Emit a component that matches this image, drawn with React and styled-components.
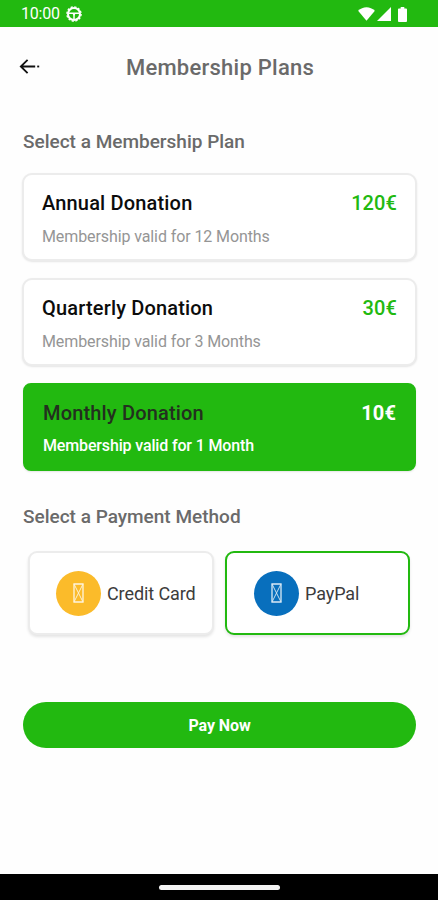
import React, { useState } from "react";
import styled, { createGlobalStyle, ThemeProvider } from "styled-components";

const theme = {
  primary: "#22b910",
  card: "#ffffff",
  text_primary: "#0c0c0c",
  text_secondary: "#6a6a6a",
  text_muted: "#959595",
  border: "#ececec",
};

const GlobalStyle = createGlobalStyle`
  * {
    box-sizing: border-box;
  }
  body {
    margin: 0;
    background: #ffffff;
    font-family: Roboto, "Liberation Sans", sans-serif;
  }
`;

const Screen = styled.div`
  width: 438px;
  height: 900px;
  display: flex;
  flex-direction: column;
  background: #fefefe;
  overflow: hidden;
`;

const StatusBar = styled.div`
  height: 27px;
  padding: 1px 31px 0 21px;
  display: flex;
  align-items: center;
  justify-content: space-between;
  background: ${({ theme }) => theme.primary};
  color: white;
`;

const StatusGroup = styled.div`
  display: flex;
  align-items: center;
  gap: ${({ $gap }) => $gap}px;
`;

const Clock = styled.span`
  font-size: 16px;
  line-height: 20px;
  letter-spacing: -0.2px;
`;

const BatterySlot = styled.span`
  display: flex;
  margin-left: 5px;
`;

const Header = styled.header`
  height: 80px;
  padding: 0 19px;
  display: grid;
  grid-template-columns: 24px 1fr 22px;
  align-items: center;
`;

const BackButton = styled.button`
  display: flex;
  padding: 0;
  border: none;
  background: none;
  cursor: pointer;
`;

const Title = styled.h1`
  margin: 0;
  padding-top: 2px;
  font-size: 22px;
  line-height: 26px;
  font-weight: 500;
  letter-spacing: 0.25px;
  text-align: center;
  color: ${({ theme }) => theme.text_secondary};
`;

const Content = styled.main`
  flex: 1;
  padding: 23px 21px 0 22px;
  display: flex;
  flex-direction: column;
`;

const SectionTitle = styled.h2`
  margin: 0 0 0 1px;
  font-size: 19px;
  line-height: 24px;
  font-weight: 500;
  color: ${({ theme }) => theme.text_secondary};
`;

const PlanList = styled.div`
  margin: 19px 0 34px;
  display: flex;
  flex-direction: column;
  gap: 17px;
`;

const PlanCard = styled.div`
  height: 88px;
  padding: 16px 18px 0;
  border: 2px solid ${({ theme }) => theme.border};
  border-radius: 10px;
  background: ${({ theme }) => theme.card};
  box-shadow: 0 1px 2px rgba(0, 0, 0, 0.1);
  cursor: pointer;
  ${({ $active, theme }) =>
    $active &&
    `
    margin: 0 1px;
    border-color: ${theme.primary};
    border-radius: 8px;
    background: ${theme.primary};
  `}
`;

const PlanTop = styled.div`
  display: flex;
  justify-content: space-between;
  line-height: 24px;
  font-size: 20px;
`;

const PlanName = styled.span`
  font-weight: 500;
  letter-spacing: 0.17px;
  color: ${({ $active, theme }) => ($active ? "#23301f" : theme.text_primary)};
`;

const PlanPrice = styled.span`
  font-weight: ${({ $active }) => ($active ? 700 : 500)};
  letter-spacing: 0.1px;
  color: ${({ $active, theme }) => ($active ? "white" : theme.primary)};
`;

const PlanNote = styled.p`
  margin: ${({ $active }) => ($active ? 11 : 12)}px 0 0;
  font-size: 16px;
  line-height: 20px;
  font-weight: ${({ $active }) => ($active ? 500 : 400)};
  letter-spacing: ${({ $active }) => ($active ? -0.15 : -0.1)}px;
  color: ${({ $active, theme }) => ($active ? "white" : theme.text_muted)};
`;

const MethodRow = styled.div`
  margin: 22px 7px 67px 6px;
  display: grid;
  grid-template-columns: 186px 185px;
  justify-content: space-between;
`;

const MethodCard = styled.div`
  height: 84px;
  padding-left: ${({ $active }) => ($active ? 27 : 26)}px;
  display: flex;
  align-items: center;
  gap: 6px;
  border: 2px solid ${({ $active, theme }) => ($active ? theme.primary : theme.border)};
  border-radius: 9px;
  background: ${({ theme }) => theme.card};
  box-shadow: 0 2px 3px rgba(0, 0, 0, 0.1);
  cursor: pointer;
`;

const MethodIcon = styled.span`
  width: 45px;
  height: 45px;
  display: flex;
  align-items: center;
  justify-content: center;
  border-radius: 50%;
  background: ${({ $color }) => $color};
`;

const MethodName = styled.span`
  padding-top: 1px;
  font-size: 18px;
  line-height: 22px;
  letter-spacing: -0.1px;
  color: #3c3c3c;
`;

const PayButton = styled.button`
  height: 46px;
  margin: 0 1px;
  padding: 1px 0 0;
  border: none;
  border-radius: 23px;
  background: ${({ theme }) => theme.primary};
  color: white;
  font-family: inherit;
  font-size: 16px;
  font-weight: 700;
  letter-spacing: -0.1px;
  cursor: pointer;
`;

const NavBar = styled.div`
  height: 26px;
  display: flex;
  justify-content: center;
  align-items: center;
  background: #000000;
`;

const NavHandle = styled.div`
  width: 121px;
  height: 5px;
  border-radius: 3px;
  background: #f4f4f4;
`;

const plans = [
  { id: "annual", name: "Annual Donation", price: "120€", note: "Membership valid for 12 Months" },
  { id: "quarterly", name: "Quarterly Donation", price: "30€", note: "Membership valid for 3 Months" },
  { id: "monthly", name: "Monthly Donation", price: "10€", note: "Membership valid for 1 Month" },
];

const methods = [
  { id: "card", name: "Credit Card", color: "#fbbb2a" },
  { id: "paypal", name: "PayPal", color: "#086fbd" },
];

const WheelIcon = () => (
  <svg width="16" height="16" viewBox="0 0 16 16" fill="none" stroke="white">
    <circle cx="8" cy="8" r="6" strokeWidth="2" />
    <circle cx="8" cy="8" r="7.1" strokeWidth="1.4" strokeDasharray="2.2 1.52" />
    <path d="M3 7.2h10M8 8v5" strokeWidth="1.5" />
    <path d="M5.8 7h4.4L8 9.8z" fill="white" stroke="none" />
  </svg>
);

const WifiIcon = () => (
  <svg width="17" height="14" viewBox="0 0 18 15" fill="white">
    <path d="M0 4.1C5-1 13-1 18 4.1L9 14.8z" />
  </svg>
);

const SignalIcon = () => (
  <svg width="14" height="14" viewBox="0 0 14 14" fill="white">
    <path d="M14 0v14H0z" />
  </svg>
);

const BatteryIcon = () => (
  <svg width="9" height="15" viewBox="0 0 10 16" preserveAspectRatio="none" fill="white">
    <path d="M3 0h4v1.6h2q1 0 1 1V15q0 1-1 1H1q-1 0-1-1V2.6q0-1 1-1h2z" />
  </svg>
);

const BackIcon = () => (
  <svg width="22" height="18" viewBox="0 0 22 18" fill="none" stroke="#111" strokeWidth="1.8">
    <path d="M8.6 1.8L1.8 8.5l6.8 6.7M1.8 8.5h14.4" />
    <path d="M18.2 8.5h2" />
  </svg>
);

const MissingGlyph = () => (
  <svg width="11" height="20" viewBox="0 0 11 20" fill="none" stroke="white" opacity="0.85">
    <path d="M1 1h9v18H1z" strokeWidth="1.3" />
    <path d="M1 1l9 18M10 1L1 19" strokeWidth="0.9" />
  </svg>
);

const App = () => {
  const [plan, setPlan] = useState("monthly");
  const [method, setMethod] = useState("paypal");

  return (
    <ThemeProvider theme={theme}>
      <GlobalStyle />
      <Screen>
        <StatusBar>
          <StatusGroup $gap={6}>
            <Clock>10:00</Clock>
            <WheelIcon />
          </StatusGroup>
          <StatusGroup $gap={2}>
            <WifiIcon />
            <SignalIcon />
            <BatterySlot>
              <BatteryIcon />
            </BatterySlot>
          </StatusGroup>
        </StatusBar>
        <Header>
          <BackButton aria-label="Back">
            <BackIcon />
          </BackButton>
          <Title>Membership Plans</Title>
        </Header>
        <Content>
          <SectionTitle>Select a Membership Plan</SectionTitle>
          <PlanList>
            {plans.map((item) => {
              const active = item.id === plan;
              return (
                <PlanCard key={item.id} $active={active} onClick={() => setPlan(item.id)}>
                  <PlanTop>
                    <PlanName $active={active}>{item.name}</PlanName>
                    <PlanPrice $active={active}>{item.price}</PlanPrice>
                  </PlanTop>
                  <PlanNote $active={active}>{item.note}</PlanNote>
                </PlanCard>
              );
            })}
          </PlanList>
          <SectionTitle>Select a Payment Method</SectionTitle>
          <MethodRow>
            {methods.map((item) => (
              <MethodCard
                key={item.id}
                $active={item.id === method}
                onClick={() => setMethod(item.id)}
              >
                <MethodIcon $color={item.color}>
                  <MissingGlyph />
                </MethodIcon>
                <MethodName>{item.name}</MethodName>
              </MethodCard>
            ))}
          </MethodRow>
          <PayButton>Pay Now</PayButton>
        </Content>
        <NavBar>
          <NavHandle />
        </NavBar>
      </Screen>
    </ThemeProvider>
  );
};

export default App;
